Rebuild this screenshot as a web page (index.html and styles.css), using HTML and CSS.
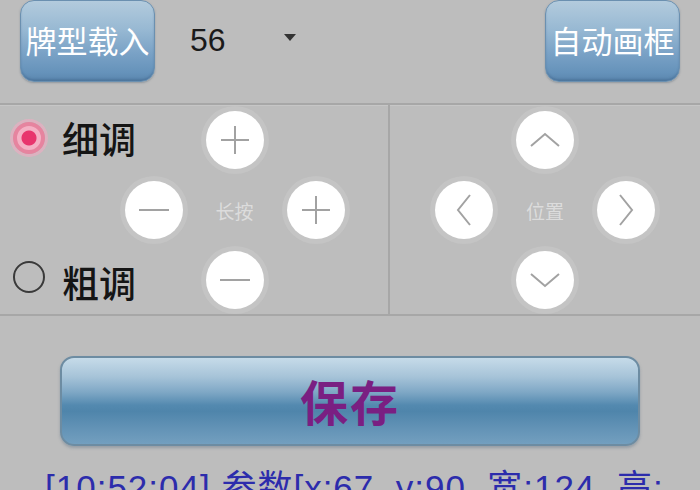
FILE: index.html
```html
<!DOCTYPE html>
<html lang="zh">
<head>
<meta charset="utf-8">
<title>画框调整</title>
<link rel="stylesheet" href="styles.css">
</head>
<body>
<div class="screen">
  <div class="topbar">
    <div class="blue-btn">牌型载入</div>
    <div class="select">
      <span class="select-value">56</span>
      <span class="select-arrow"></span>
    </div>
    <div class="blue-btn right">自动画框</div>
  </div>

  <div class="pads">
    <div class="pad-left">
      <label class="radio r1"><span class="dot checked"></span><span class="rlabel">细调</span></label>
      <div class="cbtn c-top"><svg viewBox="0 0 58 58"><path d="M15 29H43M29 15V43"/></svg></div>
      <div class="cbtn c-left"><svg viewBox="0 0 58 58"><path d="M14 29H44"/></svg></div>
      <div class="pad-label c-mid">长按</div>
      <div class="cbtn c-right"><svg viewBox="0 0 58 58"><path d="M15 29H43M29 15V43"/></svg></div>
      <label class="radio r3"><span class="dot"></span><span class="rlabel">粗调</span></label>
      <div class="cbtn c-bottom"><svg viewBox="0 0 58 58"><path d="M14 29H44"/></svg></div>
    </div>
    <div class="pad-right">
      <div class="dpad">
        <div class="cbtn d-top"><svg viewBox="0 0 58 58"><path d="M15 35L29 23L43 35"/></svg></div>
        <div class="cbtn d-left"><svg viewBox="0 0 58 58"><path d="M35 14L23 29L35 44"/></svg></div>
        <div class="pad-label d-mid">位置</div>
        <div class="cbtn d-right"><svg viewBox="0 0 58 58"><path d="M23 14L35 29L23 44"/></svg></div>
        <div class="cbtn d-bottom"><svg viewBox="0 0 58 58"><path d="M15 23L29 35L43 23"/></svg></div>
      </div>
    </div>
  </div>

  <div class="save-area">
    <div class="save-btn">保存</div>
    <div class="status">[10:52:04] 参数[x:67, y:90, 宽:124, 高:</div>
  </div>
</div>
</body>
</html>
```

FILE: styles.css
```css
html, body {
  margin: 0;
  padding: 0;
  background: #bdbdbd;
}
body {
  width: 700px;
  height: 490px;
  overflow: hidden;
  font-family: "Noto Sans CJK SC", "Liberation Sans", sans-serif;
}
.screen {
  display: flex;
  flex-direction: column;
}

/* top bar */
.topbar {
  height: 103px;
  display: flex;
  align-items: flex-start;
  padding: 0 20px;
  border-bottom: 2px solid #a7a7a7;
  box-shadow: 0 1px 0 #c6c6c6;
}
.blue-btn {
  width: 135px;
  height: 82px;
  box-sizing: border-box;
  border-radius: 14px;
  border: 1px solid #6b90b0;
  background: linear-gradient(#b3cbdd 0%, #98b9d3 35%, #7aa2c6 65%, #6592ba 90%, #5a86ad 100%);
  box-shadow: 0 1px 2px rgba(60,80,100,0.35), inset 0 -2px 2px rgba(40,70,110,0.25);
  color: #ffffff;
  font-size: 31px;
  line-height: 78px;
  text-align: center;
  white-space: nowrap;
  overflow: visible;
}
.blue-btn.right {
  margin-left: auto;
}
.select {
  display: flex;
  align-items: center;
  height: 80px;
  margin-left: 35px;
}
.select-value {
  font-family: "Liberation Sans", sans-serif;
  font-size: 32px;
  color: #1a1a1a;
}
.select-arrow {
  width: 0;
  height: 0;
  margin-left: 58px;
  margin-top: -6px;
  border-left: 6px solid transparent;
  border-right: 6px solid transparent;
  border-top: 7px solid #333;
}

/* pads */
.pads {
  display: flex;
  height: 209px;
  border-bottom: 2px solid #a7a7a7;
}
.pad-left {
  width: 388px;
  border-right: 2px solid #a7a7a7;
  display: grid;
  grid-template-columns: 113px 81px 81px 81px 1fr;
  grid-template-rows: 70px 70px 69px;
  align-items: center;
  justify-items: center;
}
.pad-right {
  flex: 1;
  display: flex;
  justify-content: center;
}
.dpad {
  display: grid;
  grid-template-columns: 81px 81px 81px;
  grid-template-rows: 70px 70px 69px;
  align-items: center;
  justify-items: center;
}

.radio {
  display: flex;
  align-items: center;
  justify-self: start;
  margin-left: 13px;
}
.r1 { grid-column: 1 / 3; grid-row: 1; margin-top: -4px; }
.r3 { grid-column: 1 / 3; grid-row: 3; margin-top: 4px; }
.dot {
  width: 32px;
  height: 32px;
  box-sizing: border-box;
  border-radius: 50%;
  border: 2px solid #3a3a3a;
  margin-right: 17px;
}
.r3 .dot { margin-top: -10px; }
.dot.checked {
  border: 4px solid #e6849f;
  background: radial-gradient(circle, #e8356d 0, #e8356d 7px, #f4b0c4 8px, #f4b0c4 100%);
  box-shadow: 0 0 0 3px rgba(245,170,195,0.55);
}
.rlabel {
  font-size: 37px;
  color: #151515;
  font-weight: 500;
}

.cbtn {
  width: 58px;
  height: 58px;
  border-radius: 50%;
  background: #ffffff;
  box-shadow: 0 0 0 5px rgba(210,210,210,0.35);
}
.cbtn svg {
  display: block;
  width: 58px;
  height: 58px;
  fill: none;
  stroke: #a2a2a2;
  stroke-width: 2;
}
.c-top { grid-column: 3; grid-row: 1; }
.c-left { grid-column: 2; grid-row: 2; }
.c-mid { grid-column: 3; grid-row: 2; }
.c-right { grid-column: 4; grid-row: 2; }
.c-bottom { grid-column: 3; grid-row: 3; }
.d-top { grid-column: 2; grid-row: 1; }
.d-left { grid-column: 1; grid-row: 2; }
.d-mid { grid-column: 2; grid-row: 2; }
.d-right { grid-column: 3; grid-row: 2; }
.d-bottom { grid-column: 2; grid-row: 3; }

.pad-label {
  color: #dcdcdc;
  font-size: 19px;
}

/* save */
.save-area {
  display: flex;
  flex-direction: column;
  align-items: center;
  padding-top: 40px;
}
.save-btn {
  width: 580px;
  height: 90px;
  box-sizing: border-box;
  border: 2px solid #6d8ca2;
  border-radius: 14px;
  background: linear-gradient(#c6dbe9 0%, #a6c3d8 22%, #7ea7c5 40%, #5389af 55%, #4f85ab 62%, #6393b6 82%, #739fbf 100%);
  box-shadow: 0 2px 3px rgba(90,110,130,0.4);
  color: #7a1f82;
  font-size: 48px;
  font-weight: 700;
  line-height: 84px;
  text-align: center;
  letter-spacing: 2px;
}
.status {
  align-self: flex-start;
  margin-left: 45px;
  margin-top: 22px;
  font-family: "Liberation Sans", "Noto Sans CJK SC", sans-serif;
  font-size: 35px;
  line-height: 40px;
  letter-spacing: 1px;
  color: #2c2cac;
  white-space: nowrap;
}
```
